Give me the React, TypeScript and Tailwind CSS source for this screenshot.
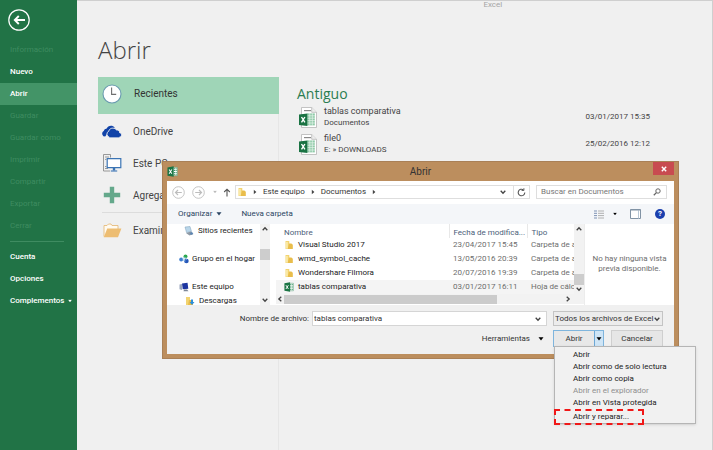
import React from 'react';

interface MenuEntry {
  label: string;
  disabled?: boolean;
}

interface RecentFile {
  name: string;
  location: string;
  date: string;
}

interface FolderRow {
  name: string;
  modified: string;
  type: string;
  file?: boolean;
}

const sidebarItems: MenuEntry[] = [
  { label: 'Información', disabled: true },
  { label: 'Nuevo' },
  { label: 'Abrir' },
  { label: 'Guardar', disabled: true },
  { label: 'Guardar como', disabled: true },
  { label: 'Imprimir', disabled: true },
  { label: 'Compartir', disabled: true },
  { label: 'Exportar', disabled: true },
  { label: 'Cerrar', disabled: true },
];

const recentFiles: RecentFile[] = [
  { name: 'tablas comparativa', location: 'Documentos', date: '03/01/2017 15:35' },
  { name: 'file0', location: 'E: » DOWNLOADS', date: '25/02/2016 12:12' },
];

const rows: FolderRow[] = [
  { name: 'Visual Studio 2017', modified: '23/04/2017 15:45', type: 'Carpeta de archivos' },
  { name: 'wmd_symbol_cache', modified: '13/05/2016 20:39', type: 'Carpeta de archivos' },
  { name: 'Wondershare Filmora', modified: '20/07/2016 19:39', type: 'Carpeta de archivos' },
  { name: 'tablas comparativa', modified: '03/01/2017 16:11', type: 'Hoja de cálculo', file: true },
];

const openOptions: MenuEntry[] = [
  { label: 'Abrir' },
  { label: 'Abrir como de solo lectura' },
  { label: 'Abrir como copia' },
  { label: 'Abrir en el explorador', disabled: true },
  { label: 'Abrir en Vista protegida' },
];

const Chevron = ({ className = '' }: { className?: string }) => (
  <svg viewBox="0 0 8 8" className={`w-2 h-2 shrink-0 ${className}`} fill="none" stroke="#444" strokeWidth="1.3">
    <path d="M1.7 2.7 4 5.2 6.3 2.7" />
  </svg>
);

const Caret = ({ className = '' }: { className?: string }) => (
  <svg viewBox="0 0 6 4" className={`w-[6px] h-1 shrink-0 ${className}`} fill="currentColor">
    <path d="M.5.3h5L3 3.6z" />
  </svg>
);

const Crumb = () => (
  <svg viewBox="0 0 4 6" className="w-1 h-[6px] shrink-0" fill="#444">
    <path d="M.8.8 3.4 3 .8 5.2z" />
  </svg>
);

const FolderIcon = () => (
  <svg viewBox="0 0 10 10" className="w-[10px] h-[10px] shrink-0">
    <path d="M1.5 1h3.8v8H1.5z" fill="#f3d470" />
    <path d="M5 3.6h2.4l1.4 1.2V9H3.6z" fill="#e9bd4b" />
    <path d="M2.2 2h1.5v6.4H2.2z" fill="#fbeeb5" />
  </svg>
);

const ExcelIcon = ({ className = '' }: { className?: string }) => (
  <svg viewBox="0 0 12 12" className={`shrink-0 ${className}`}>
    <path d="M6 1.5h5.3v9H6z" fill="#fff" stroke="#4e9a72" strokeWidth=".6" />
    <path d="M7.4 3h1.4M9.4 3h1.2M7.4 5h1.4M9.4 5h1.2M7.4 7h1.4M9.4 7h1.2M7.4 9h1.4M9.4 9h1.2" stroke="#3f9a6b" strokeWidth="1.1" />
    <path d="M.5 1.5 7.3.4v11.2L.5 10.5z" fill="#1c7545" />
    <path d="m2.3 3.8 3 4.6M5.3 3.8l-3 4.6" stroke="#fff" strokeWidth="1.1" />
  </svg>
);

const WorkbookIcon = () => (
  <svg viewBox="0 0 18 21" className="w-[18px] h-[21px] shrink-0">
    <path d="M2.5.5h10.2l4.8 4.8v15.2h-15z" fill="#fff" stroke="#b5b5b5" strokeWidth=".8" />
    <path d="M12.7.5v4.8h4.8" fill="#eee" stroke="#b5b5b5" strokeWidth=".8" />
    <path d="M5 3.6h7" stroke="#8a8a8a" strokeWidth="1.2" />
    <path d="M8.2 6.4h7.6v12H8.2z" fill="#8fcaa8" />
    <path d="M8 8.8h8M8 11.2h8M8 13.6h8M8 16h8M10.8 6v13M13.3 6v13" stroke="#e8f5ed" strokeWidth=".7" />
    <path d="m0 7.4 8.4-1v12.6L0 18z" fill="#1a7343" />
    <path d="m2.5 10 3.4 5.4M5.9 10l-3.4 5.4" stroke="#fff" strokeWidth="1.4" />
  </svg>
);

const ClockIcon = () => (
  <svg viewBox="0 0 20 20" className="w-5 h-5">
    <circle cx="10" cy="10" r="9" fill="#fff" stroke="#6b9bb0" strokeWidth="1.1" />
    <path d="M9.6 3.6v6.8h4.6" fill="none" stroke="#6f6f6f" strokeWidth="1.1" />
  </svg>
);

const OneDriveIcon = () => (
  <svg viewBox="0 0 20 13" className="w-5 h-[13px]">
    <path d="M3.2 11.6A3 3 0 0 1 1.7 6 3.4 3.4 0 0 1 4.7 3.4C5.6 1 10-.8 12.8 2.6L8 5z" fill="#1143a8" />
    <path
      d="M7.2 12.2a3.2 3.2 0 0 1-.4-6c.4-3 5-4.5 7.6-1.3 1.8-.2 3.3 1 3.2 2.8 2.8.6 2.4 4.5-.3 4.5z"
      fill="#1143a8"
      stroke="#f0f0f0"
      strokeWidth=".9"
    />
    <path d="M7.4 11.6h9.8" stroke="#1143a8" strokeWidth="1.4" />
  </svg>
);

const PcIcon = () => (
  <svg viewBox="0 0 20 20" className="w-5 h-5" fill="none">
    <path d="M1.5 1.5h7v3M1.5 1.5v16.5h6.5" stroke="#8d8d8d" strokeWidth=".9" />
    <path d="M3 4h4M3 6.4h1.4M3 13.5h1.4M3 15.5h3" stroke="#8d8d8d" strokeWidth=".9" />
    <path d="M5.2 5.6h13.6v9H5.2z" fill="#fff" stroke="#3b74b4" strokeWidth="1.2" />
    <path d="M12 15v2.5" stroke="#3b74b4" strokeWidth="2.4" />
    <path d="M8.8 18h6.4" stroke="#3b74b4" strokeWidth="1.1" />
  </svg>
);

const PlusIcon = () => (
  <svg viewBox="0 0 18 18" className="w-[18px] h-[18px]">
    <path d="M6.8.8h4.4v6h6v4.4h-6v6H6.8v-6h-6V6.8h6z" fill="#64a88b" />
  </svg>
);

const OpenFolderIcon = () => (
  <svg viewBox="0 0 19 15" className="w-[19px] h-[15px]">
    <path d="M1 13.5V2.5h3L5.5 1H8l1 1.5h6V6" fill="#fffaf0" stroke="#e3b56e" strokeWidth=".8" />
    <path d="M4.2 5.5h14.2L15 14.2H.8z" fill="#edbd72" />
  </svg>
);

const places = [
  { label: 'OneDrive', icon: <OneDriveIcon /> },
  { label: 'Este PC', icon: <PcIcon /> },
  { label: 'Agregar un sitio', icon: <PlusIcon /> },
];

const Sidebar: React.FC = () => (
  <nav className="w-[77px] shrink-0 bg-[#217346] text-white text-[8px] leading-[22px] font-medium">
    <div className="h-[39px] pl-2 pt-[9px]">
      <button aria-label="Atrás" className="block">
        <svg viewBox="0 0 22 22" className="w-[22px] h-[22px]" fill="none" stroke="#fff">
          <circle cx="11" cy="11" r="10.2" strokeWidth="1.2" />
          <path d="M17 11H7.2M10.8 7 6.8 11l4 4" strokeWidth="1.9" />
        </svg>
      </button>
    </div>
    {sidebarItems.map((item) => (
      <button
        key={item.label}
        disabled={item.disabled}
        className={`block w-full pl-[10px] text-left whitespace-nowrap ${
          item.disabled ? 'text-[#3f8c61] font-normal' : ''
        } ${item.label === 'Abrir' ? 'bg-[#439467]' : ''}`}
      >
        {item.label}
      </button>
    ))}
    <hr className="ml-[10px] mr-[13px] my-1 border-[#3f8c61]" />
    <button className="block w-full pl-[10px] text-left">Cuenta</button>
    <button className="block w-full pl-[10px] text-left">Opciones</button>
    <button className="flex items-center gap-[2px] w-full pl-[10px] text-left">
      Complementos
      <Caret className="scale-75" />
    </button>
  </nav>
);

const Places: React.FC = () => (
  <div className="w-[181px] shrink-0 text-[10px] text-[#444]">
    <button className="flex items-center gap-3 w-full h-[37px] pl-1 pb-1 bg-[#9fd5b7] text-[#333]">
      <span className="flex w-5 justify-center"><ClockIcon /></span>
      Recientes
    </button>
    <div className="h-[336px] pt-px border-r border-[#e6e6e6]">
      {places.map((place) => (
        <button key={place.label} className="flex items-center gap-[11px] w-full h-8 pl-1 whitespace-nowrap">
          <span className="flex w-5 justify-center">{place.icon}</span>
          {place.label}
        </button>
      ))}
      <hr className="ml-1 mr-3 my-px border-[#dcdcdc]" />
      <button className="flex items-center gap-[11px] w-full h-8 pl-1">
        <span className="flex w-5 justify-center"><OpenFolderIcon /></span>
        Examinar
      </button>
    </div>
  </div>
);

const Recents: React.FC = () => (
  <section className="flex-1 pl-[18px] pt-2 pr-[62px] text-[#444]">
    <h2 className="font-['Open_Sans',sans-serif] text-[14px] leading-[18px] text-[#2b7d50]">Antiguo</h2>
    <ul>
      {recentFiles.map((file) => (
        <li key={file.name}>
          <a href="#" className="flex items-center h-[27px] pl-[2px] pt-px">
            <WorkbookIcon />
            <span className="flex-1 pl-[7px]">
              <span className="block text-[9px] leading-3">{file.name}</span>
              <span className="block text-[8px] leading-3">{file.location}</span>
            </span>
            <time className="text-[8px]">{file.date}</time>
          </a>
        </li>
      ))}
    </ul>
  </section>
);

const AddressBar: React.FC = () => (
  <div className="flex items-center h-[23px] pl-[5px] pr-[7px] pb-px">
    {['M8.8 5.5H2.6M5 3 2.5 5.5 5 8', 'M2.2 5.5h6.2M6 3l2.5 2.5L6 8'].map((d, i) => (
      <button key={d} aria-label={i === 0 ? 'Atrás' : 'Adelante'} className="mr-[7px]">
        <svg viewBox="-1 -1 13 13" className="w-[13px] h-[13px]" fill="none" stroke="#bdbdbd">
          <circle cx="5.5" cy="5.5" r="5.8" strokeWidth=".9" />
          <path d={d} strokeWidth="1.2" />
        </svg>
      </button>
    ))}
    <Caret className="text-[#bbb] scale-75" />
    <button aria-label="Subir" className="ml-[5px] mr-1">
      <svg viewBox="0 0 8 9" className="w-2 h-[9px]" fill="none" stroke="#555" strokeWidth="1.1">
        <path d="M4 8.5V1.2M1.2 4 4 1.2 6.8 4" />
      </svg>
    </button>
    <div className="flex flex-1 items-center gap-[6px] h-[14px] pl-px border border-[#dedede]">
      <FolderIcon />
      <Crumb />
      <a href="#">Este equipo</a>
      <Crumb />
      <a href="#">Documentos</a>
      <Crumb />
      <Chevron className="ml-auto" />
      <button aria-label="Actualizar" className="flex items-center h-full px-[3px] border-l border-[#dedede]">
        <svg viewBox="0 0 9 9" className="w-[9px] h-[9px]" fill="none" stroke="#555" strokeWidth="1.1">
          <path d="M6.4 1.8A3.3 3.3 0 1 0 7.8 4.6" />
          <path d="M4.6 2.5h2.3V.2" strokeWidth=".9" />
        </svg>
      </button>
    </div>
    <div className="flex items-center w-[131px] h-[14px] ml-[6px] pl-1 pr-[5px] border border-[#dedede]">
      <input aria-label="Buscar" placeholder="Buscar en Documentos" className="flex-1 min-w-0 outline-none placeholder:text-[#777]" />
      <svg viewBox="0 0 8 8" className="w-2 h-2 shrink-0" fill="none" stroke="#666">
        <circle cx="5" cy="3" r="2.2" />
        <path d="M3.4 4.6.8 7.2" strokeWidth="1.3" />
      </svg>
    </div>
  </div>
);

const Toolbar: React.FC = () => (
  <div className="flex items-center h-5 pl-[11px] pr-[9px] bg-[#f4f6f9] text-[#2b4562]">
    <button className="flex items-center gap-1">
      Organizar
      <Caret />
    </button>
    <button className="ml-[19px]">Nueva carpeta</button>
    <button aria-label="Cambiar la vista" className="flex items-center gap-2 ml-auto">
      <svg viewBox="0 0 10 9" className="w-[10px] h-[9px]" strokeWidth="1">
        <path d="M0 1h3M0 3.3h3M0 5.6h3M0 8h3" stroke="#7f93b5" />
        <path d="M4 1h6M4 3.3h6M4 5.6h6M4 8h6" stroke="#b0b0b0" />
      </svg>
      <Caret className="scale-75 text-black" />
    </button>
    <button aria-label="Panel de vista previa" className="ml-3">
      <svg viewBox="0 0 11 10" className="w-[11px] h-[10px]" fill="#fff" stroke="#8193a5">
        <path d="M.5.5h10v9H.5z" />
        <path d="M8.5 1.5v8" stroke="#b9c8d6" />
        <path d="M.5 1h10" />
      </svg>
    </button>
    <button aria-label="Ayuda" className="ml-[14px] w-[10px] h-[10px] rounded-full bg-[#1b3fae] text-white text-[8px] leading-[10px] font-bold">
      ?
    </button>
  </div>
);

const NavPane: React.FC = () => (
  <div className="flex w-[103px] shrink-0">
    <ul className="flex-1 leading-[14px] text-[#222] whitespace-nowrap overflow-hidden">
      <li className="flex items-center gap-1 h-[14px] pl-[17px] mb-[14px]">
        <svg viewBox="0 0 10 10" className="w-[10px] h-[10px] shrink-0">
          <path d="m1 1 5-.5 1.5 5-5 1z" fill="#b9d6ea" stroke="#7d9fb8" strokeWidth=".5" />
          <path d="m2 7 5-1.5L9.5 8l-4 1.5z" fill="#8d99a5" />
          <circle cx="7.5" cy="7.5" r="1.3" fill="#5a85b5" />
        </svg>
        Sitios recientes
      </li>
      <li className="flex items-center gap-[3px] h-[14px] pl-3 mb-[14px]">
        <svg viewBox="0 0 10 10" className="w-[10px] h-[10px] shrink-0">
          <circle cx="2.2" cy="5.5" r="2" fill="#3f7fd0" />
          <circle cx="6.5" cy="2.5" r="2" fill="#2aa84e" />
          <circle cx="7.4" cy="7" r="2.3" fill="#2456b8" />
          <path d="m3 5 3-2M3.5 6l3 1M6.8 3l.5 3" stroke="#9cc7ee" strokeWidth=".8" />
        </svg>
        Grupo en el hogar
      </li>
      <li className="flex items-center gap-[3px] h-[14px] pl-3">
        <svg viewBox="0 0 10 10" className="w-[10px] h-[10px] shrink-0">
          <path d="M.5 2.5 3 2v6l-2.5-.7z" fill="#9aa6bd" />
          <path d="m3 1.5 5.5-.8.8 6-5.6.5z" fill="#1c35a0" />
          <path d="M5 7.5h3l1.5 1.7H4.5z" fill="#7d8798" />
        </svg>
        Este equipo
      </li>
      <li className="h-[11px] pl-[18px] overflow-hidden">
        <span className="flex items-center gap-1 h-[14px]">
          <svg viewBox="0 0 10 10" className="w-[10px] h-[10px] shrink-0">
            <path d="M1 1h4v8H1z" fill="#f3d470" />
            <path d="M4 4h4v5H3z" fill="#e9bd4b" />
            <path d="M6 3.5h2v2.5h1.5L7 9 4.6 6H6z" fill="#2d8fd8" />
          </svg>
          Descargas
        </span>
      </li>
    </ul>
    <div className="flex flex-col items-center w-[10px] bg-[#f2f2f2] py-px">
      <Chevron className="rotate-180" />
      <div className="w-full h-[11px] mt-4 bg-[#cdcdcd]" />
      <Chevron className="mt-auto" />
    </div>
  </div>
);

const FileList: React.FC = () => (
  <div className="flex-1 min-w-0 pl-[6px]">
    <div className="flex">
      <div className="flex-1 min-w-0 overflow-hidden">
        <table className="w-full table-fixed text-left whitespace-nowrap leading-[14px]">
          <thead className="text-[#4c607a]">
            <tr className="h-[14px]">
              <th className="p-0 pl-2 pt-1 font-normal leading-[10px]">Nombre</th>
              <th className="w-[78px] p-0 pl-1 pt-1 font-normal leading-[10px] border-l border-[#e8e8e8]">Fecha de modifica...</th>
              <th className="w-[47px] p-0 pl-1 pt-1 font-normal leading-[10px] border-l border-[#e8e8e8]">Tipo</th>
            </tr>
          </thead>
          <tbody className="text-[#6d6d6d]">
            {rows.map((row) => (
              <tr key={row.name} className={row.file ? 'bg-[#f4f4f4]' : ''}>
                <td className="p-0 pl-2 text-[#222]">
                  <span className="flex items-center gap-[4px] h-[14px]">
                    {row.file ? <ExcelIcon className="w-[10px] h-[10px]" /> : <FolderIcon />}
                    {row.name}
                  </span>
                </td>
                <td className="p-0 pl-1">{row.modified}</td>
                <td className="p-0 pl-1 overflow-hidden">{row.type}</td>
              </tr>
            ))}
          </tbody>
        </table>
      </div>
      <div className="flex flex-col items-center w-[10px] py-px bg-[#f2f2f2]">
        <Chevron className="rotate-180" />
        <div className="w-full h-[11px] mt-auto bg-[#cdcdcd]" />
        <Chevron />
      </div>
    </div>
    <div className="flex items-center h-[10px] bg-[#f2f2f2]">
      <Chevron className="rotate-90" />
      <div className="w-[69%] h-[9px] bg-[#cbcbcb]" />
      <Chevron className="ml-auto mr-3 -rotate-90" />
    </div>
  </div>
);

const OpenMenu: React.FC = () => (
  <div
    role="menu"
    className="absolute top-full left-0 w-[142px] h-[78px] pt-[2px] bg-[#f1f1f1] border border-[#b5b5b5] text-[#222] shadow-sm"
  >
    {openOptions.map((option) => (
      <button
        key={option.label}
        role="menuitem"
        disabled={option.disabled}
        className="block w-full h-3 pl-[18px] text-left leading-3 whitespace-nowrap disabled:text-[#8f8f8f]"
      >
        {option.label}
      </button>
    ))}
    <button
      role="menuitem"
      className="block w-[90px] h-4 -ml-px pl-[17px] text-left leading-3 border-2 border-dashed border-[#f01818]"
    >
      Abrir y reparar...
    </button>
  </div>
);

const OpenDialog: React.FC = () => (
  <div
    role="dialog"
    aria-label="Abrir"
    className="absolute left-[162px] right-[34px] top-[161px] px-1 pb-1 bg-[#bc8e5e] border border-[#a98057] text-[8px] leading-[12px] text-[#333]"
  >
    <header className="relative h-[19px]">
      <ExcelIcon className="absolute left-0 top-1 w-[11px] h-[11px]" />
      <h2 className="text-center text-[10px] leading-[19px]">Abrir</h2>
      <button aria-label="Cerrar" className="absolute right-0 top-0 flex items-center justify-center w-[21px] h-[13px] bg-[#c84b50]">
        <svg viewBox="0 0 6 6" className="w-[6px] h-[6px]" stroke="#fff" strokeWidth="1.4">
          <path d="m.8.8 4.4 4.4M5.2.8.8 5.2" />
        </svg>
      </button>
    </header>
    <div className="bg-white">
      <AddressBar />
      <Toolbar />
      <div className="flex">
        <NavPane />
        <FileList />
        <p className="w-[90px] shrink-0 pt-[30px] leading-[10px] text-center text-[#6d6d6d] border-l border-[#ececec]">
          No hay ninguna vista previa disponible.
        </p>
      </div>
    </div>
    <footer className="h-[49px] pt-[6px] pr-[11px] bg-[#f0f0f0]">
      <div className="flex items-center justify-end">
        <label htmlFor="filename" className="mr-[3px]">Nombre de archivo:</label>
        <div className="flex items-center w-[235px] h-[15px] pr-1 bg-white border border-[#d5d5d5]">
          <input id="filename" defaultValue="tablas comparativa" className="flex-1 min-w-0 pl-px outline-none" />
          <Chevron />
        </div>
        <div className="relative flex items-center w-[110px] h-[15px] ml-[6px] bg-[#ececec] border border-[#c4c4c4]">
          <select aria-label="Tipo de archivo" className="w-full pl-px appearance-none outline-none">
            <option>Todos los archivos de Excel</option>
          </select>
          <Chevron className="absolute right-px pointer-events-none" />
        </div>
      </div>
      <div className="flex items-center justify-end mt-1">
        <button className="flex items-center gap-2 mr-[9px]">
          Herramientas
          <Caret className="text-black" />
        </button>
        <div className="relative flex h-[17px] border border-[#7fb5dd] bg-[#e8e8e8]">
          <button className="w-10">Abrir</button>
          <button aria-label="Más opciones" className="flex items-center justify-center w-[9px] bg-[#cfe5f6] border-l border-[#6da8d6]">
            <Caret className="text-black" />
          </button>
          <OpenMenu />
        </div>
        <button className="w-[52px] h-[17px] ml-[7px] bg-[#e6e6e6] border border-[#cfcfcf]">Cancelar</button>
      </div>
    </footer>
  </div>
);

const App: React.FC = () => (
  <div className="relative flex min-h-screen overflow-hidden bg-[#f0f0f0] font-['Roboto','Open_Sans',sans-serif]">
    <Sidebar />
    <main className="flex flex-col flex-1 border-t border-r border-b border-[#cfcfcf]">
      <p className="pl-[64%] h-3 text-[8px] leading-[8px] text-[#a5a5a5]">Excel</p>
      <h1 className="pl-[21px] pt-[20px] h-16 font-['Open_Sans',sans-serif] text-[24px] leading-[34px] font-light text-[#444]">Abrir</h1>
      <div className="flex pl-[21px]">
        <Places />
        <Recents />
      </div>
    </main>
    <OpenDialog />
  </div>
);

export default App;
